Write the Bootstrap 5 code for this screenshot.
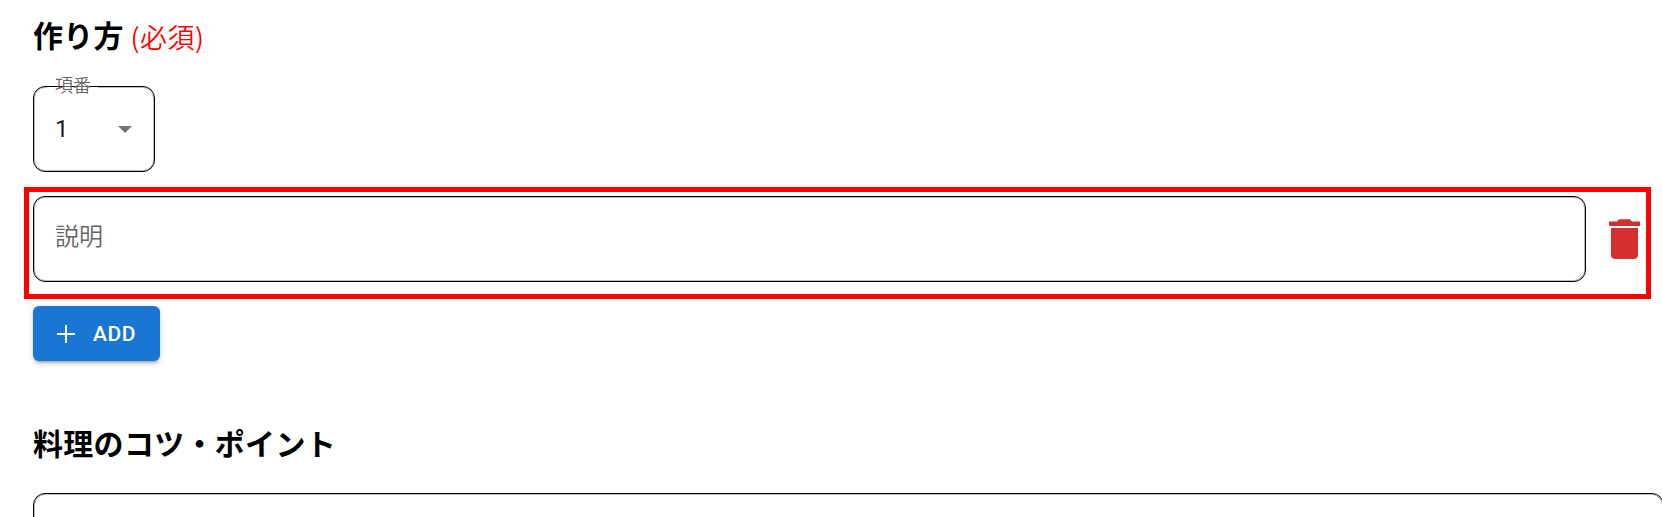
<!DOCTYPE html>
<html lang="ja">
<head>
<meta charset="utf-8">
<meta name="viewport" content="width=device-width, initial-scale=1">
<title>作り方</title>
<link href="https://cdn.jsdelivr.net/npm/bootstrap@5.3.0/dist/css/bootstrap.min.css" rel="stylesheet">
<style>
body{font-family:Roboto,"Noto Sans CJK JP",sans-serif;background:#fff;color:#000;overflow:hidden}
.recipe{height:517px;overflow:hidden;padding:12px 0 0 24px}
.heading{font:700 30px/45px "Noto Sans CJK JP",sans-serif;letter-spacing:.2px;margin:0 0 0 9px}
.required{font:350 27px/45px "Noto Sans CJK JP",sans-serif;color:#f00;margin:2px 0 -2px 7px;letter-spacing:.5px}
.outlined{border:1px solid #000;border-radius:12px;box-shadow:inset 0 0 0 1px #bbb}
.step-select{width:122px;height:86px;margin:29px 0 0 9px;padding:0 22px 0 21px;font-size:24px;color:#222}
.step-select::before{content:"";position:absolute;left:13px;top:0;width:51px;height:1px;background:#fff}
.step-label{left:21px;top:-13px;font-weight:350;font-size:18px;line-height:24px;color:#666}
.frame{width:1627px;height:112px;margin-top:15px;border:5px solid #f00;padding:4px 0 0 4px}
.description{width:1553px;height:86px;padding:0 21px 5px;font-weight:350;font-size:24px;color:#666}
.trash{margin:-3px 0 0 15px}
.add-btn{width:127px;height:55px;margin:7px 0 0 9px;padding:0 0 0 21px;border:0;border-radius:6px;background:#1976d2!important;color:#fff;font-weight:500;font-size:21px;letter-spacing:.6px;box-shadow:0 4px 2px -3px #0003,0 3px 3px #00000024,0 1px 7px #0000001f}
.add-text{margin:2px 0 0 15px}
.tips{margin-top:59px;letter-spacing:.3px}
.tips-box{width:1631px;height:120px;margin:28px 0 0 9px}
</style>
</head>
<body>
<main class="recipe">
  <div class="d-flex"><h2 class="heading">作り方</h2><span class="required">(必須)</span></div>
  <div class="outlined step-select position-relative d-flex align-items-center justify-content-between">
    <label class="step-label position-absolute">項番</label><span>1</span>
    <svg width="14" height="7" viewBox="0 0 14 7"><path d="M0 0h14L7 7z" fill="#757575"/></svg>
  </div>
  <div class="frame d-flex">
    <div class="outlined description d-flex align-items-center flex-shrink-0">説明</div>
    <svg class="trash flex-shrink-0" width="52" height="88" viewBox="0 0 52 88"><path fill="#d32f2f" d="M8 28.500h8l2-2.300h11l2 2.300h8V33H8zM10 35h27v26.500q0 4.500-4.500 4.500h-18q-4.500 0-4.500-4.500z"/></svg>
  </div>
  <button class="btn btn-primary add-btn d-flex align-items-center">
    <svg width="24" height="24" viewBox="0 0 24 24" fill="none" stroke="#fff" stroke-width="2"><path d="M12 3v18M3 12h18"/></svg><span class="add-text">ADD</span>
  </button>
  <h2 class="heading tips">料理のコツ・ポイント</h2>
  <div class="outlined tips-box"></div>
</main>
<script src="https://cdn.jsdelivr.net/npm/bootstrap@5.3.0/dist/js/bootstrap.bundle.min.js"></script>
</body>
</html>
